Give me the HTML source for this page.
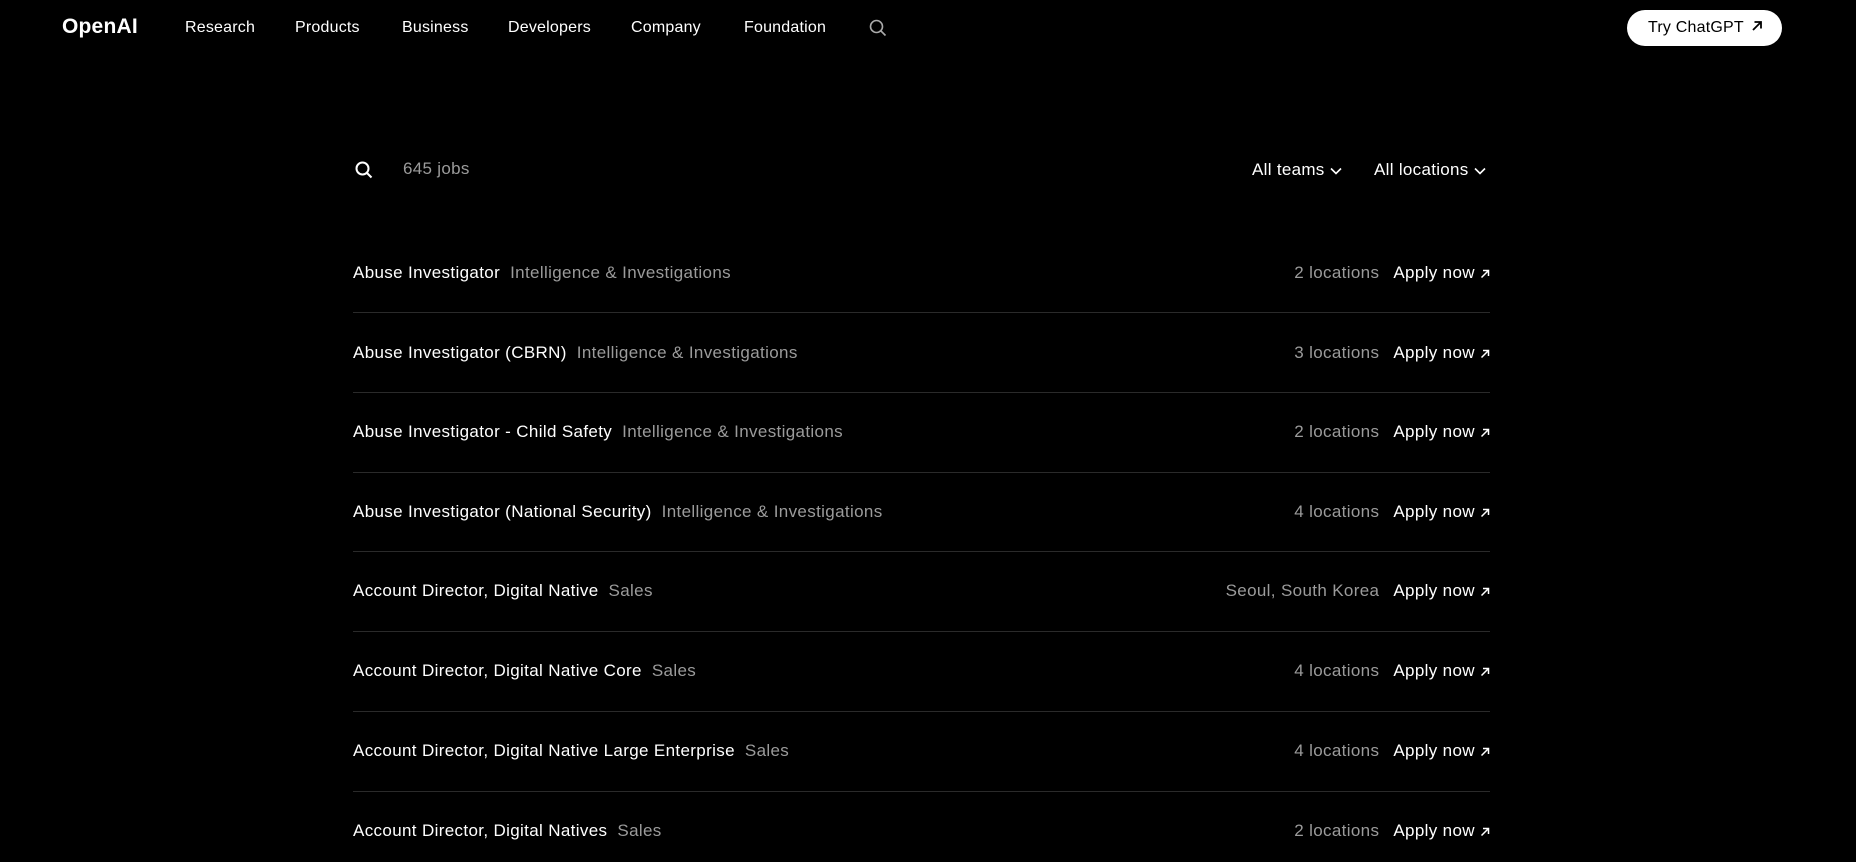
<!DOCTYPE html>
<html><head><meta charset="utf-8"><style>
*{margin:0;padding:0;box-sizing:border-box}
body{width:1856px;height:862px;background:#000;color:#fff;font-family:"Liberation Sans",Arial,sans-serif;overflow:hidden;position:relative}
.a{position:absolute;white-space:nowrap}
.nav{font-size:16px;top:18px;line-height:20px;letter-spacing:0.2px}
.row{position:absolute;left:353px;width:1137px;height:24px;font-size:17px;line-height:24px;letter-spacing:0.35px}
.row .t{position:absolute;left:0;top:0;white-space:nowrap}
.row .g{color:#9b9b9b;margin-left:10px}
.row .r{position:absolute;right:0;top:0;white-space:nowrap}
.row .r .g{margin-right:14px}
.line{position:absolute;left:353px;width:1137px;height:1px;background:#2a2a2a}
svg{vertical-align:middle}
</style></head><body>
<div class="a" style="left:62px;top:13px;font-size:21px;font-weight:bold;letter-spacing:0.2px;line-height:28px">OpenAI</div>
<div class="a nav" style="left:185px">Research</div>
<div class="a nav" style="left:295px">Products</div>
<div class="a nav" style="left:402px">Business</div>
<div class="a nav" style="left:508px">Developers</div>
<div class="a nav" style="left:631px">Company</div>
<div class="a nav" style="left:744px">Foundation</div>
<svg class="a" style="left:869px;top:19px" width="18" height="18" viewBox="0 0 18 18" fill="none" stroke="#aaa" stroke-width="1.6"><circle cx="7.5" cy="7.5" r="6"/><path d="M12 12l4.5 4.5"/></svg>
<div class="a" style="left:1627px;top:10px;width:155px;height:36px;background:#fff;border-radius:18px;color:#000;font-size:16px;line-height:36px;padding-left:21px;letter-spacing:0.2px">Try ChatGPT <svg width="12" height="12" viewBox="0 0 12 12" fill="none" stroke="#000" stroke-width="1.8" style="margin-left:3px;margin-top:-3px"><path d="M2 10L10 2M3.5 2H10v6.5"/></svg></div>

<svg class="a" style="left:355px;top:161px" width="18" height="18" viewBox="0 0 18 18" fill="none" stroke="#fff" stroke-width="2"><circle cx="7.5" cy="7.5" r="6"/><path d="M12 12l4.5 4.5"/></svg>
<div class="a" style="left:403px;top:158px;font-size:17px;line-height:22px;color:#9b9b9b;letter-spacing:0.3px">645 jobs</div>
<div class="a" style="left:1252px;top:159px;font-size:17px;line-height:22px;letter-spacing:0.3px">All teams <svg width="12" height="8" viewBox="0 0 12 8" fill="none" stroke="#fff" stroke-width="1.6"><path d="M1 1.5l5 5 5-5"/></svg></div>
<div class="a" style="left:1374px;top:159px;font-size:17px;line-height:22px;letter-spacing:0.3px">All locations <svg width="12" height="8" viewBox="0 0 12 8" fill="none" stroke="#fff" stroke-width="1.6"><path d="M1 1.5l5 5 5-5"/></svg></div>

<div class="row" style="top:261px"><span class="t">Abuse Investigator<span class="g">Intelligence &amp; Investigations</span></span><span class="r"><span class="g">2 locations</span>Apply now <svg width="10" height="10" viewBox="0 0 10 10" fill="none" stroke="#fff" stroke-width="1.5"><path d="M1.5 8.5L8.5 1.5M3 1.5h5.5V7"/></svg></span></div>
<div class="line" style="top:312px"></div>
<div class="row" style="top:341px"><span class="t">Abuse Investigator (CBRN)<span class="g">Intelligence &amp; Investigations</span></span><span class="r"><span class="g">3 locations</span>Apply now <svg width="10" height="10" viewBox="0 0 10 10" fill="none" stroke="#fff" stroke-width="1.5"><path d="M1.5 8.5L8.5 1.5M3 1.5h5.5V7"/></svg></span></div>
<div class="line" style="top:392px"></div>
<div class="row" style="top:420px"><span class="t">Abuse Investigator - Child Safety<span class="g">Intelligence &amp; Investigations</span></span><span class="r"><span class="g">2 locations</span>Apply now <svg width="10" height="10" viewBox="0 0 10 10" fill="none" stroke="#fff" stroke-width="1.5"><path d="M1.5 8.5L8.5 1.5M3 1.5h5.5V7"/></svg></span></div>
<div class="line" style="top:472px"></div>
<div class="row" style="top:500px"><span class="t">Abuse Investigator (National Security)<span class="g">Intelligence &amp; Investigations</span></span><span class="r"><span class="g">4 locations</span>Apply now <svg width="10" height="10" viewBox="0 0 10 10" fill="none" stroke="#fff" stroke-width="1.5"><path d="M1.5 8.5L8.5 1.5M3 1.5h5.5V7"/></svg></span></div>
<div class="line" style="top:551px"></div>
<div class="row" style="top:579px"><span class="t">Account Director, Digital Native<span class="g">Sales</span></span><span class="r"><span class="g">Seoul, South Korea</span>Apply now <svg width="10" height="10" viewBox="0 0 10 10" fill="none" stroke="#fff" stroke-width="1.5"><path d="M1.5 8.5L8.5 1.5M3 1.5h5.5V7"/></svg></span></div>
<div class="line" style="top:631px"></div>
<div class="row" style="top:659px"><span class="t">Account Director, Digital Native Core<span class="g">Sales</span></span><span class="r"><span class="g">4 locations</span>Apply now <svg width="10" height="10" viewBox="0 0 10 10" fill="none" stroke="#fff" stroke-width="1.5"><path d="M1.5 8.5L8.5 1.5M3 1.5h5.5V7"/></svg></span></div>
<div class="line" style="top:711px"></div>
<div class="row" style="top:739px"><span class="t">Account Director, Digital Native Large Enterprise<span class="g">Sales</span></span><span class="r"><span class="g">4 locations</span>Apply now <svg width="10" height="10" viewBox="0 0 10 10" fill="none" stroke="#fff" stroke-width="1.5"><path d="M1.5 8.5L8.5 1.5M3 1.5h5.5V7"/></svg></span></div>
<div class="line" style="top:791px"></div>
<div class="row" style="top:819px"><span class="t">Account Director, Digital Natives<span class="g">Sales</span></span><span class="r"><span class="g">2 locations</span>Apply now <svg width="10" height="10" viewBox="0 0 10 10" fill="none" stroke="#fff" stroke-width="1.5"><path d="M1.5 8.5L8.5 1.5M3 1.5h5.5V7"/></svg></span></div>
</body></html>
